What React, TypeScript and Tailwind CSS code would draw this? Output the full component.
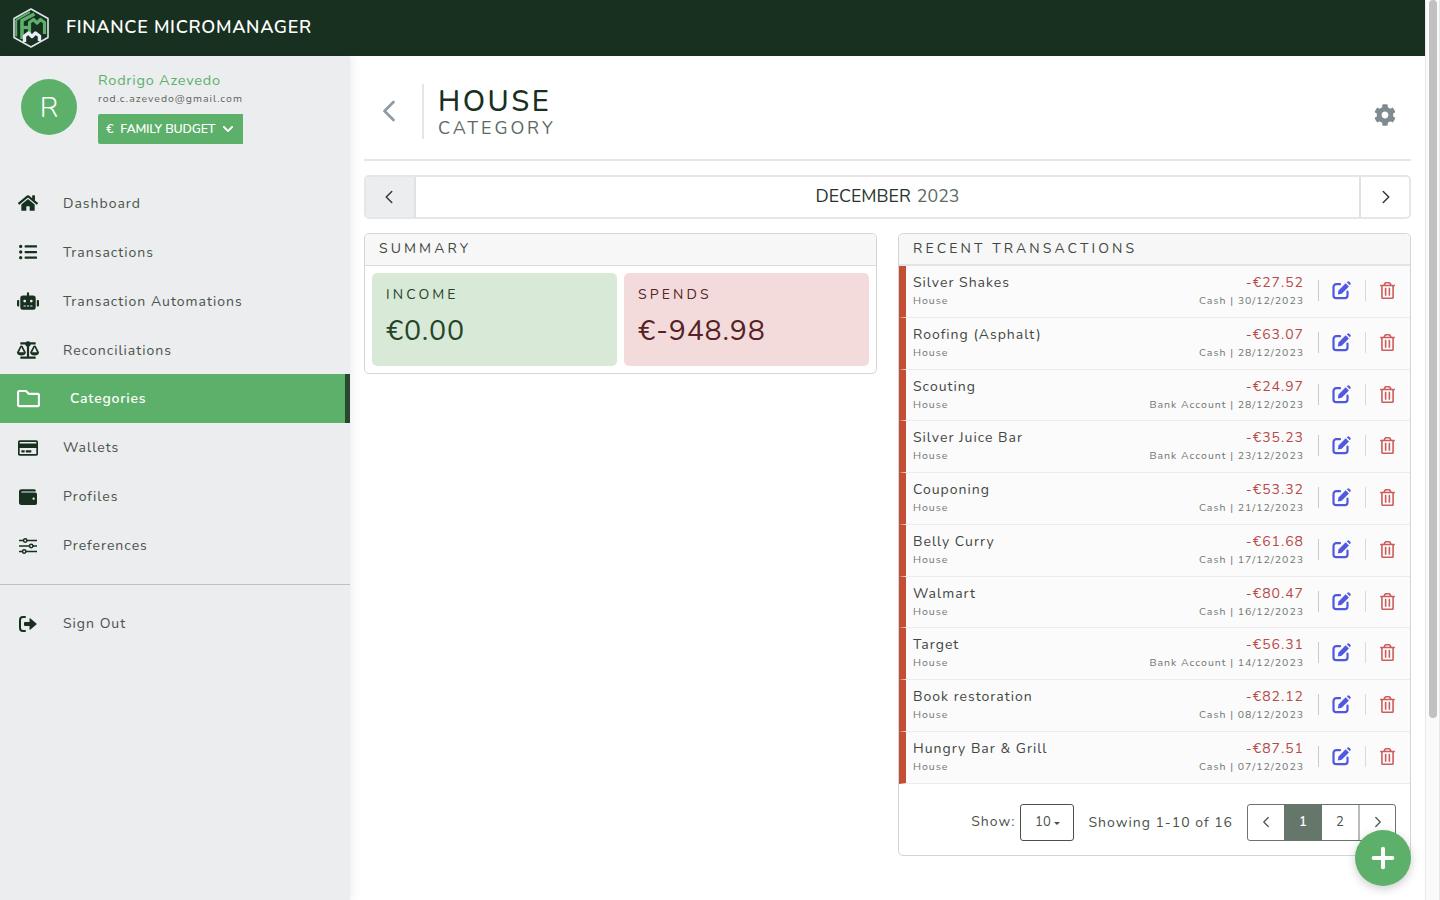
import {
    FaHome,
    FaListUl,
    FaRobot,
    FaBalanceScale,
    FaRegFolder,
    FaRegCreditCard,
    FaWallet,
    FaCog,
    FaRegTrashAlt,
    FaChevronDown,
} from "react-icons/fa";
import { LuChevronLeft, LuChevronRight, LuPlus } from "react-icons/lu";

const font = "font-['Nunito','Lato','Noto_Sans',sans-serif]";

const navItems = [
    { label: "Dashboard", icon: <FaHome size={20} /> },
    { label: "Transactions", icon: <FaListUl size={18} /> },
    { label: "Transaction Automations", icon: <FaRobot size={22} /> },
    { label: "Reconciliations", icon: <FaBalanceScale size={22} /> },
];

const navItemsBottom = [
    { label: "Wallets", icon: <FaRegCreditCard size={20} /> },
    { label: "Profiles", icon: <FaWallet size={18} /> },
    { label: "Preferences", icon: <SlidersIcon /> },
];

const transactions = [
    { name: "Silver Shakes", amount: "-€27.52", meta: "Cash | 30/12/2023" },
    { name: "Roofing (Asphalt)", amount: "-€63.07", meta: "Cash | 28/12/2023" },
    { name: "Scouting", amount: "-€24.97", meta: "Bank Account | 28/12/2023" },
    { name: "Silver Juice Bar", amount: "-€35.23", meta: "Bank Account | 23/12/2023" },
    { name: "Couponing", amount: "-€53.32", meta: "Cash | 21/12/2023" },
    { name: "Belly Curry", amount: "-€61.68", meta: "Cash | 17/12/2023" },
    { name: "Walmart", amount: "-€80.47", meta: "Cash | 16/12/2023" },
    { name: "Target", amount: "-€56.31", meta: "Bank Account | 14/12/2023" },
    { name: "Book restoration", amount: "-€82.12", meta: "Cash | 08/12/2023" },
    { name: "Hungry Bar & Grill", amount: "-€87.51", meta: "Cash | 07/12/2023" },
];

function SlidersIcon() {
    return (
        <svg width="18" height="16" viewBox="0 0 18 16" fill="none" stroke="currentColor" strokeWidth="1.5">
            <path d="M0 2.5h4.5M8 2.5h10M0 8h10.5M14 8h4M0 13.5h3.5M7 13.5h11" />
            <circle cx="6.2" cy="2.5" r="1.7" />
            <circle cx="12.2" cy="8" r="1.7" />
            <circle cx="5.2" cy="13.5" r="1.7" />
        </svg>
    );
}

function SignOutIcon() {
    return (
        <svg width="18" height="16" viewBox="0 0 18 16" fill="currentColor">
            <path d="M6 1H4a3 3 0 0 0-3 3v8a3 3 0 0 0 3 3h2" fill="none" stroke="currentColor" strokeWidth="2" strokeLinecap="round" />
            <path d="M6 6h4.5V2.8a.6.6 0 0 1 1-.4L17.4 7.6a.6.6 0 0 1 0 .8l-5.9 5.2a.6.6 0 0 1-1-.4V10H6a1 1 0 0 1-1-1V7a1 1 0 0 1 1-1Z" />
        </svg>
    );
}

function EditIcon() {
    return (
        <svg width="19" height="19" viewBox="0 0 19 19" fill="currentColor">
            <path d="M8 3.2H4.2A2.7 2.7 0 0 0 1.5 5.9v8.6a2.7 2.7 0 0 0 2.7 2.7h8.6a2.7 2.7 0 0 0 2.7-2.7v-4" fill="none" stroke="currentColor" strokeWidth="2.2" strokeLinecap="round" />
            <path d="M6.5 9.5 13.7 2.3 16.9 5.5 9.7 12.7 5.8 13.4Z" />
            <path d="M14.8 1.2 15.4.7a1.4 1.4 0 0 1 1.9 0l1 1a1.4 1.4 0 0 1 0 1.9l-.5.7Z" />
        </svg>
    );
}

function Logo() {
    return (
        <svg width="36" height="40" viewBox="0 0 36 40" fill="none">
            <path d="M18 1 35 10.5V29.5L18 39 1 29.5V10.5Z" fill="#183020" stroke="#dfe4ea" strokeWidth="1.6" strokeLinejoin="round" />
            <path d="M3.2 11.8 17 4.2" stroke="#5cb06a" strokeWidth="2" />
            <path d="M3.2 11.8V28.4" stroke="#5cb06a" strokeWidth="2" />
            <path d="M9 31V12.5L21.5 6" stroke="#5cb06a" strokeWidth="3.6" />
            <path d="M9 19.5H15" stroke="#5cb06a" strokeWidth="3.2" />
            <path d="M16.5 25V14.5L20.5 11.5 24 15 27.5 11.5 31.5 14.5V26" stroke="#5cb06a" strokeWidth="3.2" strokeLinejoin="round" />
            <path d="M11.5 34V28L15.5 25 19 28.5 22.5 25 26.5 28V33" stroke="#e9ecf6" strokeWidth="3.4" strokeLinejoin="round" />
        </svg>
    );
}

function NavRow({ label, icon, labelClass }: { label: string; icon: React.ReactNode; labelClass?: string }) {
    return (
        <div className="flex h-[49px] items-center text-[#183020]">
            <div className="flex w-[56px] justify-center">{icon}</div>
            <span className={`ml-[7px] text-[14px] tracking-[1px] text-[#4a524c] ${labelClass ?? ""}`}>{label}</span>
        </div>
    );
}

function Sidebar() {
    return (
        <aside className="z-10 flex w-[350px] shrink-0 flex-col bg-[#ebedef] shadow-[2px_0_10px_rgba(0,0,0,0.08)]">
            <div className="flex h-[122px] pl-[21px] pt-[14px]">
                <div className="mt-[9px] flex h-[56px] w-[56px] items-center justify-center rounded-full bg-[#5cb06a] pt-[1px] text-[28px] font-light text-white">
                    R
                </div>
                <div className="ml-[21px] flex flex-col">
                    <span className="text-[14.5px] leading-[20px] tracking-[0.77px] text-[#5cb06a]">Rodrigo Azevedo</span>
                    <span className="mt-[1px] text-[10.5px] leading-[16px] tracking-[1px] text-[#5f6661]">rod.c.azevedo@gmail.com</span>
                    <button className="mt-[7px] flex h-[30px] w-[145px] items-center rounded-l-[2px] bg-[#5cb06a] pl-[8px] text-[12.5px] font-semibold tracking-[-0.15px] text-white">
                        <span>€</span>
                        <span className="ml-[7px]">FAMILY BUDGET</span>
                        <FaChevronDown size={12} className="ml-[7px]" />
                    </button>
                </div>
            </div>
            <nav className="flex flex-col">
                {navItems.map((item) => (
                    <NavRow key={item.label} {...item} labelClass="mt-[2px]" />
                ))}
                <div className="flex h-[49px] items-center border-r-[5px] border-[#27472f] bg-[#5cb06a] text-white">
                    <div className="flex w-[56px] justify-center">
                        <FaRegFolder size={23} />
                    </div>
                    <span className="ml-[14px] text-[14px] font-semibold tracking-[0.8px]">Categories</span>
                </div>
                {navItemsBottom.map((item) => (
                    <NavRow key={item.label} {...item} />
                ))}
            </nav>
            <div className="mt-[14px] border-t border-[#b9c4ba] pt-[14px]">
                <NavRow label="Sign Out" icon={<SignOutIcon />} />
            </div>
        </aside>
    );
}

function TransactionRow({ name, amount, meta }: { name: string; amount: string; meta: string }) {
    return (
        <div className="flex h-[51.75px] items-center border-b border-[#ececec] border-l-[7px] border-l-[#c24e33] bg-[#fbfbfb] pb-[1.5px]">
            <div className="flex-1 pl-[7px]">
                <div className="text-[14px] leading-[20px] tracking-[1px] text-[#3f4742]">{name}</div>
                <div className="mt-[1px] text-[10.5px] leading-[14px] tracking-[1px] text-[#6f7671]">House</div>
            </div>
            <div className="text-right">
                <div className="text-[14px] leading-[20px] tracking-[1px] text-[#b84a48]">{amount}</div>
                <div className="mt-[1px] text-[10.5px] leading-[14px] tracking-[1px] text-[#6f7671]">{meta}</div>
            </div>
            <div className="ml-[14px] h-[21px] w-px bg-[#c8ccc9]" />
            <div className="flex w-[46px] justify-center pr-[1px] text-[#5058e0]">
                <EditIcon />
            </div>
            <div className="h-[21px] w-px bg-[#d8dad8]" />
            <div className="flex w-[44px] justify-center pr-[2px] text-[#cd5c5c]">
                <FaRegTrashAlt size={17} />
            </div>
        </div>
    );
}

function Content() {
    return (
        <main className="relative flex-1 px-[14px] pt-[28px]">
            <div className="flex h-[77px] items-start border-b-2 border-[#e6e6e6]">
                <div className="flex h-[55px] w-[60px] items-center justify-center border-r-2 border-[#e4e6e6] text-[#8f9aa3]">
                    <LuChevronLeft size={36} strokeWidth={1.8} className="mr-[9px] -mt-[2px]" />
                </div>
                <div className="ml-[14px] flex flex-1 flex-col">
                    <span className="mt-[1px] text-[29px] font-medium leading-[34px] tracking-[2.5px] text-[#183020]">HOUSE</span>
                    <span className="-mt-[1px] text-[18px] leading-[20px] tracking-[2.9px] text-[#5c6a62]">CATEGORY</span>
                </div>
                <div className="mr-[15px] mt-[20px] text-[#7f8a91]">
                    <FaCog size={22} />
                </div>
            </div>

            <div className="mt-[14px] flex h-[44px] items-stretch rounded-[5px] border-2 border-[#e6e6e6]">
                <div className="flex w-[50px] items-center justify-center rounded-l-[4px] border-r-2 border-[#dfe1e3] bg-[#ebedef] text-[#2f3a33]">
                    <LuChevronLeft size={22} strokeWidth={1.6} className="mb-[1px] mr-[2px]" />
                </div>
                <div className="flex flex-1 items-center justify-center pb-[2px] text-[17.8px] text-[#27332b]">
                    DECEMBER <span className="ml-[6px] text-[#5c6a62]">2023</span>
                </div>
                <div className="flex w-[50px] items-center justify-center border-l-2 border-[#dfe1e3] text-[#2f3a33]">
                    <LuChevronRight size={22} strokeWidth={1.6} className="mb-[1px] ml-[1px]" />
                </div>
            </div>

            <div className="mt-[14px] flex items-start gap-[21px]">
                <section className="w-[513px] rounded-[5px] border border-[#d4d6d6]">
                    <div className="flex h-[32px] items-center rounded-t-[5px] border-b border-[#dcdcdc] bg-[#f7f7f7] pb-[2px] pl-[14px] text-[14px] tracking-[3.1px] text-[#3f4742]">
                        SUMMARY
                    </div>
                    <div className="flex gap-[7px] p-[7px]">
                        <div className="h-[93px] flex-1 rounded-[5px] bg-[#d9e9d7] pl-[14px] pt-[11px] text-[#25452a]">
                            <div className="text-[14px] tracking-[3.1px]">INCOME</div>
                            <div className="mt-[5px] text-[28.5px] tracking-[0.8px]">€0.00</div>
                        </div>
                        <div className="h-[93px] flex-1 rounded-[5px] bg-[#f3dbdc] pl-[14px] pt-[11px] text-[#552226]">
                            <div className="text-[14px] tracking-[3.1px]">SPENDS</div>
                            <div className="mt-[5px] text-[28.5px] tracking-[0.8px]">€-948.98</div>
                        </div>
                    </div>
                </section>

                <section className="flex-1 rounded-[5px] border border-[#d4d6d6] pb-[14px]">
                    <div className="flex h-[32px] items-center rounded-t-[5px] border-b-2 border-[#e4e4e4] bg-[#f7f7f7] pb-[1px] pl-[14px] text-[14px] tracking-[3.1px] text-[#3f4742]">
                        RECENT TRANSACTIONS
                    </div>
                    {transactions.map((t) => (
                        <TransactionRow key={t.name} {...t} />
                    ))}
                    <div className="mt-[20px] flex items-center justify-end pr-[14px] text-[#4a524c]">
                        <span className="mb-[2px] mr-[5px] text-[14px] tracking-[1px]">Show:</span>
                        <div className="flex h-[37px] w-[54px] items-center justify-center rounded-[3px] border border-[#4a524c] pt-[2px] text-[13px]">
                            10
                            <span className="ml-[3px] h-0 w-0 border-x-[3px] border-t-[3px] border-x-transparent border-t-[#4a524c]" />
                        </div>
                        <span className="ml-[14px] mr-[14px] text-[14px] tracking-[1px]">Showing 1-10 of 16</span>
                        <div className="flex h-[37px] overflow-hidden rounded-[3px] border border-[#66766a] text-[13px]">
                            <div className="flex w-[36px] items-center justify-center">
                                <LuChevronLeft size={18} strokeWidth={1.6} />
                            </div>
                            <div className="flex w-[38px] items-center justify-center bg-[#65766a] pt-[2px] font-semibold text-white">1</div>
                            <div className="flex w-[36px] items-center justify-center pt-[2px]">2</div>
                            <div className="flex w-[37px] items-center justify-center border-l-2 border-[#b9bdb9]">
                                <LuChevronRight size={18} strokeWidth={1.6} />
                            </div>
                        </div>
                    </div>
                </section>
            </div>

            <button className="absolute right-[14px] top-[774px] flex h-[56px] w-[56px] items-center justify-center rounded-full bg-[#5cb06a] text-white shadow-[0_3px_10px_rgba(0,0,0,0.2)]">
                <LuPlus size={32} strokeWidth={3} />
            </button>
        </main>
    );
}

export default function App() {
    return (
        <div className={`flex h-[900px] overflow-hidden bg-white ${font}`}>
            <div className="flex w-[1425px] flex-col">
                <header className="flex h-[56px] shrink-0 items-center bg-[#183020] pl-[13px]">
                    <Logo />
                    <span className="mb-[2px] ml-[17px] text-[18px] font-semibold tracking-[0.7px] text-white">FINANCE MICROMANAGER</span>
                </header>
                <div className="flex flex-1">
                    <Sidebar />
                    <Content />
                </div>
            </div>
            <div className="w-[15px] border-x border-[#e8e8e8] bg-[#fafafa] px-[3px]">
                <div className="h-[718px] w-[8px] rounded-full bg-[#c1c1c1]" />
            </div>
        </div>
    );
}
